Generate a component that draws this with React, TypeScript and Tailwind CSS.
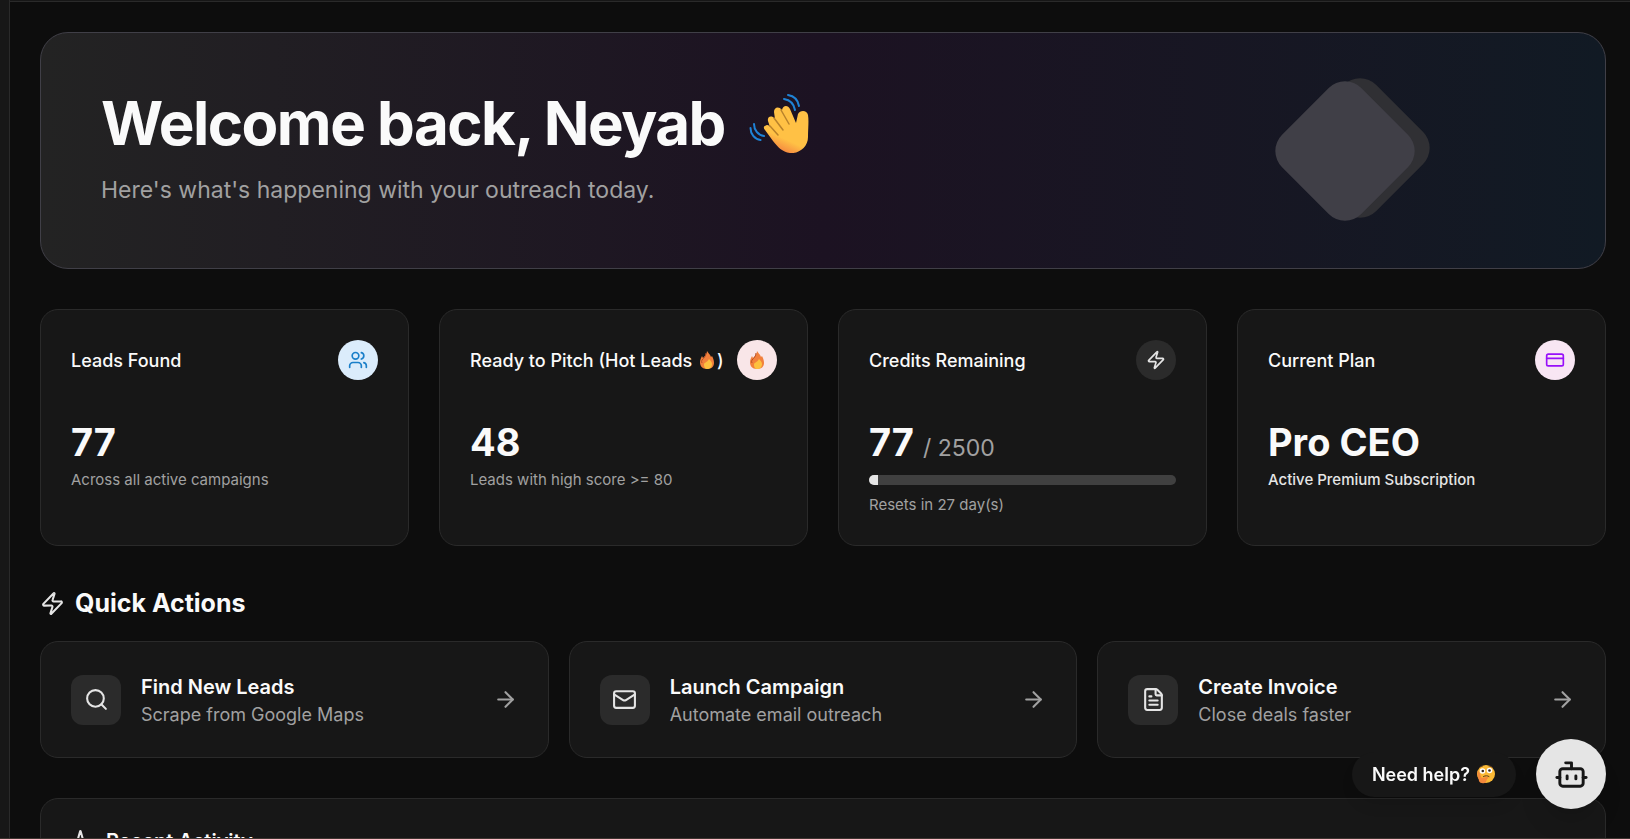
import { Activity, ArrowRight, Bot, CreditCard, FileText, Mail, Search, Users, Zap } from "lucide-react";


export default function App() {
  return (
    <div className="h-screen flex overflow-hidden border-b border-[#3d3430] bg-[#0d0d0d] text-[#fafafa] font-['Inter',sans-serif]">
      {/* edge of the sidebar */}
      <aside className="w-[10px] shrink-0 bg-[#171717] border-r border-[#2a2a2a]" />
      <div className="flex-1 min-w-0">
        <header className="h-[2px] bg-[#171717] border-b border-[#2a2a2a]" />
        <main className="pt-[30px] pl-[30px] pr-6 flex flex-col gap-10">
          <Hero />
          <Stats />
          <QuickActions />
          <RecentActivity />
        </main>
      </div>
      <HelpBot />
    </div>
  );
}

function Hero() {
  return (
    <section className="flex items-center justify-between rounded-[28px] border border-[#403f47] bg-linear-to-r from-[#232323] via-[#1c1222] to-[#111a24] p-[60px] h-[237px]">
      <div>
        <h1 className="flex items-center gap-6 text-[60px] leading-[60px] font-bold tracking-tight">
          <span>Welcome back, Neyab</span>
          <WaveEmoji />
        </h1>
        <p className="mt-5 text-[23px] leading-[35px] text-[#a1a1a1]">
          Here's what's happening with your outreach today.
        </p>
      </div>
      <svg viewBox="0 0 160 150" className="w-40 h-[150px] mr-[110px]" aria-hidden="true">
        <rect x="29" y="16" width="112" height="112" rx="23" transform="rotate(45 85 72)" fill="#303034" />
        <rect x="14" y="19" width="112" height="112" rx="23" transform="rotate(45 70 75)" fill="#403f47" />
      </svg>
    </section>
  );
}

function Stats() {
  return (
    <section className="grid grid-cols-4 gap-[30px]">
      <StatCard title="Leads Found" icon={<Users size={20} />} iconStyle="bg-[#dbecfb] text-[#1a7fc9]">
        <p className="text-[38px] leading-[45px] font-bold">77</p>
        <p className="mt-[5px] text-[15px] leading-5 text-[#a1a1a1]">Across all active campaigns</p>
      </StatCard>
      <StatCard
        title={<>Ready to Pitch (Hot Leads <FireEmoji />)</>}
        icon={<FireEmoji />}
        iconStyle="bg-[#f9e6e8]"
      >
        <p className="text-[38px] leading-[45px] font-bold">48</p>
        <p className="mt-[5px] text-[15px] leading-5 text-[#a1a1a1]">Leads with high score &gt;= 80</p>
      </StatCard>
      <StatCard title="Credits Remaining" icon={<Zap size={20} />} iconStyle="bg-[#2b2b2b] text-[#e5e5e5]">
        <p className="text-[38px] leading-[45px] font-bold">
          77 <span className="text-[23px] leading-none font-normal text-[#a1a1a1]">/ 2500</span>
        </p>
        <div className="mt-[10px] h-[10px] rounded-full overflow-hidden bg-[#404040]">
          <div className="h-full bg-[#e5e5e5]" style={{ width: `${(77 / 2500) * 100}%` }} />
        </div>
        <p className="mt-[10px] text-[15px] leading-5 text-[#a1a1a1]">Resets in 27 day(s)</p>
      </StatCard>
      <StatCard title="Current Plan" icon={<CreditCard size={20} />} iconStyle="bg-[#f8e6f3] text-[#9810fa]">
        <p className="text-[38px] leading-[45px] font-bold">Pro CEO</p>
        <p className="mt-[5px] text-[15px] leading-5 font-medium text-[#e5e5e5]">Active Premium Subscription</p>
      </StatCard>
    </section>
  );
}

function StatCard({ title, icon, iconStyle, children }: any) {
  return (
    <div className="rounded-[18px] border border-[#2a2a2a] bg-[#171717] p-[30px]">
      <div className="flex items-center justify-between mb-10">
        <h3 className="text-[18px] leading-[25px] font-medium whitespace-nowrap">{title}</h3>
        <div className={`size-10 shrink-0 rounded-full flex items-center justify-center ${iconStyle}`}>{icon}</div>
      </div>
      {children}
    </div>
  );
}

function QuickActions() {
  return (
    <section>
      <h2 className="mb-5 flex items-center gap-[10px] text-[25px] leading-[35px] font-bold">
        <Zap size={25} className="text-[#e5e5e5]" />
        Quick Actions
      </h2>
      <div className="grid grid-cols-3 gap-5">
        <ActionCard title="Find New Leads" text="Scrape from Google Maps" icon={<Search size={25} />} />
        <ActionCard title="Launch Campaign" text="Automate email outreach" icon={<Mail size={25} />} />
        <ActionCard title="Create Invoice" text="Close deals faster" icon={<FileText size={25} />} />
      </div>
    </section>
  );
}

function ActionCard({ title, text, icon }: any) {
  return (
    <a href="#" className="flex items-center gap-5 rounded-[18px] border border-[#2a2a2a] bg-[#171717] p-[30px]">
      <div className="size-[50px] shrink-0 rounded-xl bg-[#2b2b2b] text-[#e5e5e5] flex items-center justify-center">
        {icon}
      </div>
      <div className="flex-1">
        <h3 className="text-[20px] leading-[30px] font-semibold">{title}</h3>
        <p className="text-[18px] leading-[25px] text-[#a1a1a1]">{text}</p>
      </div>
      <ArrowRight size={25} className="text-[#a1a1a1]" />
    </a>
  );
}

function RecentActivity() {
  return (
    <section className="rounded-[18px] border border-[#2a2a2a] bg-[#171717] p-[30px]">
      <h2 className="flex items-center gap-[10px] text-[20px] leading-[25px] font-semibold">
        <Activity size={25} className="text-[#e5e5e5]" />
        Recent Activity
      </h2>
    </section>
  );
}

//floating over the page
function HelpBot() {
  return (
    <div className="fixed right-6 bottom-[30px] flex items-center gap-5">
      <div className="flex items-center gap-1.5 rounded-full bg-[#171717] px-5 py-[10px] text-[18px] leading-[25px] font-semibold shadow-lg">
        Need help?
        <ThinkingEmoji />
      </div>
      <button
        aria-label="Open help chat"
        className="size-[70px] rounded-full bg-[#e5e5e5] text-[#171717] flex items-center justify-center shadow-xl"
      >
        <Bot size={35} />
      </button>
    </div>
  );
}

function WaveEmoji() {
  return (
    <svg viewBox="0 0 60 60" className="size-[60px]" role="img" aria-label="waving hand">
      <defs>
        <linearGradient id="hand" x1="0.7" y1="0.3" x2="0.4" y2="1">
          <stop offset="0.6" stopColor="#ffc145" />
          <stop offset="1" stopColor="#f4813f" />
        </linearGradient>
      </defs>
      <g fill="none" stroke="#1f83d6" strokeWidth="2" strokeLinecap="round">
        <path d="M35 6c6 1 10 5 11 11" />
        <path d="M39 2c6 1 10 5 11 11" />
        <path d="M5 31c0 6 4 11 10 12" />
        <path d="M1.500 35c0 6 4 11 10 12" />
      </g>
      <path
        d="M16 33c2-2 4-1 5 1l-2-6c-1-4 3-6 6-3l1 1-1-7c0-5 5-6 8-2 1-5 6-5 8-1l6 14 2-9c2-4 9-4 10 1 1 6 0 14 0 22 0 10-9 17-18 16-8-1-12-6-17-12l-8-11c-2-2-1-4 0-4z"
        fill="url(#hand)"
      />
      <path d="M21 33l8 9M25 25l9 12M32 17l8 14" fill="none" stroke="#b9822b" strokeWidth="1.500" strokeLinecap="round" />
    </svg>
  );
}

function FireEmoji() {
  return (
    <svg viewBox="0 0 20 20" className="inline-block size-5 align-[-3px]" role="img" aria-label="fire">
      <path d="M10 1c1 2 3 3 4 6l1-1c1 2 2 4 2 7 0 3-2 6-7 6s-7-3-7-7c0-2 1-4 2-6l1 2c2-2 4-4 4-7z" fill="#f2803c" />
      <path d="M9 3c0 3-2 5-4 7M6 9c-1 1-2 2-1 4" fill="none" stroke="#b5502a" strokeWidth="1" />
      <path d="M12 9c1 1 3 3 3 5 0 3-2 5-5 5-2 0-3-2-3-4 0-3 3-2 5-6z" fill="#fdc13f" />
    </svg>
  );
}

function ThinkingEmoji() {
  return (
    <svg viewBox="0 0 20 20" className="size-5" role="img" aria-label="thinking face">
      <circle cx="10" cy="10" r="9" fill="#fbb935" />
      <path d="M2 6C0 12 3 17 8 19c-3-4-3-9-6-13z" fill="#f28a3a" />
      <circle cx="6.500" cy="7" r="2.800" fill="#fff" />
      <circle cx="13.500" cy="6.500" r="2.800" fill="#fff" />
      <circle cx="6.800" cy="7" r="1.300" fill="#3a2a20" />
      <circle cx="13.500" cy="6.500" r="1.300" fill="#3a2a20" />
      <path d="M3.500 3.500c1-1 2-1.500 3-1.500M13 2c1.500 0 2.500.5 3.500 1.500M7.500 12.500c2-1 4-1 5.500 0" fill="none" stroke="#5c3a1e" strokeWidth="1" strokeLinecap="round" />
      <path d="M2 12c1-1 2 0 2 1l1 1 6-1c2 0 2 1 0 2l-1 3c-2 2-6 1.500-7-1z" fill="#f5893c" />
    </svg>
  );
}
